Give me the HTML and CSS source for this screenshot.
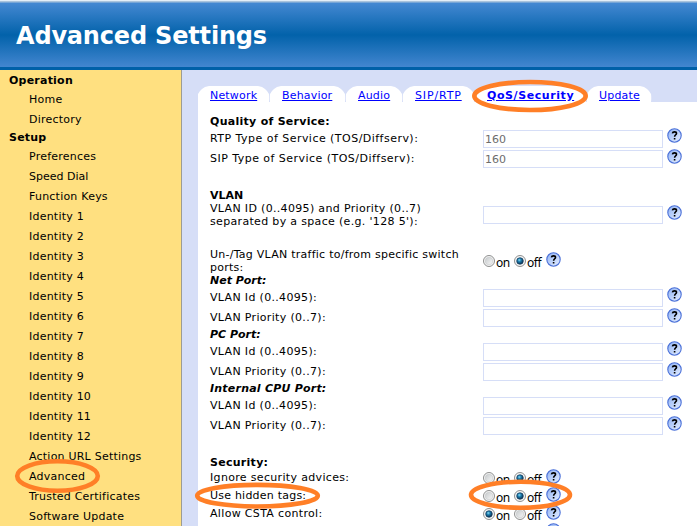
FILE: index.html
```html
<!DOCTYPE html>
<html lang="en">
<head>
<meta charset="utf-8">
<title>Advanced Settings</title>
<link rel="stylesheet" href="styles.css">
</head>
<body>
<svg class="defs" aria-hidden="true">
  <defs>
    <linearGradient id="helpFill" x1="0" y1="0" x2="1" y2="1"><stop offset="0" stop-color="#8fb2f4"/><stop offset="1" stop-color="#e8f0ff"/></linearGradient>
    <radialGradient id="dotFill" cx=".4" cy=".35" r=".65"><stop offset="0" stop-color="#8bdcf5"/><stop offset=".4" stop-color="#1d7fb0"/><stop offset="1" stop-color="#0a2c4c"/></radialGradient>
    <linearGradient id="offFill" x1="0" y1="0" x2="1" y2="1"><stop offset="0" stop-color="#c6cacc"/><stop offset="1" stop-color="#f7f7f7"/></linearGradient>
    <symbol id="help" viewBox="0 0 15 15"><circle cx="7.5" cy="7.5" r="6.7" fill="url(#helpFill)" stroke="#4a70d8" stroke-width="1.1"/><path d="M5.4 5.4C5.6 4.1 6.5 3.9 7.6 3.9C8.9 3.9 9.5 4.5 9.5 5.4C9.5 6.7 7.6 6.9 7.6 8.8M7.6 10V11.6" fill="none" stroke="#000" stroke-width="1.6"/></symbol>
    <symbol id="radio" viewBox="0 0 12 12"><circle cx="6" cy="6" r="5.5" fill="#f6f6f6" stroke="#8e8f8f"/><circle cx="6" cy="6" r="3.8" fill="url(#offFill)" stroke="#c4c8ca" stroke-width=".6"/></symbol>
    <symbol id="radio-on" viewBox="0 0 12 12"><circle cx="6" cy="6" r="5.5" fill="#f6f6f6" stroke="#8e8f8f"/><circle cx="6" cy="6" r="3.3" fill="url(#dotFill)" stroke="#123a5c" stroke-width=".7"/></symbol>
  </defs>
</svg>
<header class="banner"><h1>Advanced Settings</h1></header>
<div class="layout">
  <nav class="sidebar">
    <h2>Operation</h2>
    <ul><li>Home</li><li>Directory</li></ul>
    <h2 class="setup">Setup</h2>
    <ul>
      <li>Preferences</li><li class="normal">Speed Dial</li><li>Function Keys</li>
      <li>Identity 1</li><li>Identity 2</li><li>Identity 3</li><li>Identity 4</li><li>Identity 5</li><li>Identity 6</li>
      <li>Identity 7</li><li>Identity 8</li><li>Identity 9</li><li>Identity 10</li><li>Identity 11</li><li>Identity 12</li>
      <li>Action URL Settings</li><li>Advanced</li><li>Trusted Certificates</li><li>Software Update</li>
    </ul>
  </nav>
  <main class="content">
    <div class="tabs">
      <div class="tab network"><a href="#">Network</a></div>
      <div class="tab behavior"><a href="#">Behavior</a></div>
      <div class="tab audio"><a href="#">Audio</a></div>
      <div class="tab sip"><a href="#">SIP/RTP</a></div>
      <div class="tab qos"><a href="#">QoS/Security</a></div>
      <div class="tab update"><a href="#">Update</a></div>
    </div>
    <form class="panel">
      <h3>Quality of Service:</h3>
      <div class="row wide"><label>RTP Type of Service (TOS/Diffserv):</label><input value="160"><svg class="help"><use href="#help"/></svg></div>
      <div class="row wide second"><label>SIP Type of Service (TOS/Diffserv):</label><input value="160"><svg class="help"><use href="#help"/></svg></div>
      <h3 class="vlan">VLAN</h3>
      <div class="row double"><label>VLAN ID (0..4095) and Priority (0..7)<br>separated by a space (e.g. '128 5'):</label><input><svg class="help"><use href="#help"/></svg></div>
      <div class="row double tagging"><label>Un-/Tag VLAN traffic to/from specific switch<br>ports:</label><div class="choice"><svg class="radio"><use href="#radio"/></svg><span class="on">on</span><svg class="radio"><use href="#radio-on"/></svg><span class="off">off</span><svg class="help"><use href="#help"/></svg></div></div>
      <h3 class="port">Net Port:</h3>
      <div class="row"><label>VLAN Id (0..4095):</label><input><svg class="help"><use href="#help"/></svg></div>
      <div class="row second"><label>VLAN Priority (0..7):</label><input><svg class="help"><use href="#help"/></svg></div>
      <h3 class="port">PC Port:</h3>
      <div class="row"><label>VLAN Id (0..4095):</label><input><svg class="help"><use href="#help"/></svg></div>
      <div class="row second"><label>VLAN Priority (0..7):</label><input><svg class="help"><use href="#help"/></svg></div>
      <h3 class="port cpu">Internal CPU Port:</h3>
      <div class="row"><label>VLAN Id (0..4095):</label><input><svg class="help"><use href="#help"/></svg></div>
      <div class="row second"><label>VLAN Priority (0..7):</label><input><svg class="help"><use href="#help"/></svg></div>
      <h3 class="security">Security:</h3>
      <div class="row short"><label>Ignore security advices:</label><div class="choice"><svg class="radio"><use href="#radio"/></svg><span class="on">on</span><svg class="radio"><use href="#radio-on"/></svg><span class="off">off</span><svg class="help"><use href="#help"/></svg></div></div>
      <div class="row short"><label class="tight">Use hidden tags:</label><div class="choice"><svg class="radio"><use href="#radio"/></svg><span class="on">on</span><svg class="radio"><use href="#radio-on"/></svg><span class="off">off</span><svg class="help"><use href="#help"/></svg></div></div>
      <div class="row short"><label>Allow CSTA control:</label><div class="choice"><svg class="radio"><use href="#radio-on"/></svg><span class="on">on</span><svg class="radio"><use href="#radio"/></svg><span class="off">off</span><svg class="help"><use href="#help"/></svg></div></div>
      <div class="row short"><label></label><div class="choice last"><svg class="help"><use href="#help"/></svg></div></div>
    </form>
  </main>
</div>
<svg class="marks" viewBox="0 0 697 526" aria-hidden="true">
  <ellipse cx="530" cy="96" rx="55.7" ry="14"/>
  <ellipse cx="57.5" cy="476" rx="40.3" ry="14.8"/>
  <ellipse cx="257.5" cy="495.7" rx="60.3" ry="10.8"/>
  <ellipse cx="520.5" cy="494.8" rx="49.5" ry="13"/>
</svg>
</body>
</html>
```
FILE: styles.css
```css
* { box-sizing: border-box; }
html, body { margin: 0; height: 526px; overflow: hidden; }
body { font: 11px/13px "DejaVu Sans", Verdana, sans-serif; color: #000; background: #fff; position: relative; }
h1, h2, h3, ul { margin: 0; padding: 0; font-size: 11px; }
.defs { position: absolute; width: 0; height: 0; }
.banner { height: 70px; border-top: 1px solid #e3eef8; border-bottom: 3px solid #0060a8; background: linear-gradient(#a9c3dc 0 1px, #4488d2 2px, #0262aa 34px, #4386d0 66px); display: flex; align-items: center; padding: 4px 0 0 16px; }
.banner h1 { font-size: 24px; line-height: 30px; color: #fff; white-space: nowrap; letter-spacing: -.18px; }
.layout { display: flex; height: 456px; overflow: hidden; }
.sidebar { width: 182px; flex: none; background: #ffe080; border-right: 1px solid #9c9c94; padding-top: 4px; letter-spacing: .22px; }
.sidebar h2 { padding-left: 9px; height: 16px; line-height: 14px; }
.sidebar .setup { padding-top: 1px; height: 17px; }
.sidebar ul { list-style: none; padding-left: 29px; }
.sidebar li { height: 20px; line-height: 20px; white-space: nowrap; }
.sidebar .normal { letter-spacing: 0; }
.content { flex: 1; background: #d6def7; padding: 16px 0 0 16px; min-width: 0; }
.tabs { display: flex; height: 16px; }
.tab { flex: none; background: #fff; border-right: 1px solid #d6def7; clip-path: polygon(0 8px, 2px 5px, 4px 3px, 7px 1px, 11px 0, calc(100% - 12px) 0, calc(100% - 8px) 1px, calc(100% - 5px) 3px, calc(100% - 3px) 5px, calc(100% - 1px) 8px, 100% 100%, 0 100%); padding-left: 12px; line-height: 19px; letter-spacing: .18px; white-space: nowrap; }
.tab a { color: #00f; }
.network { width: 72px; } .behavior { width: 76px; } .audio { width: 57px; } .update { width: 65px; }
.sip { width: 72px; letter-spacing: .85px; }
.qos { width: 112px; font-weight: bold; letter-spacing: .58px; }
.panel { background: #fff; height: 500px; padding: 12px 0 0 12px; }
.panel h3 { height: 15px; line-height: 15px; letter-spacing: .28px; }
.panel .vlan { margin-top: 19px; height: 14px; letter-spacing: 0; }
.panel .port { font-style: italic; height: 14px; line-height: 13px; letter-spacing: 0; }
.panel .cpu { letter-spacing: .22px; }
.panel .security { margin-top: 19px; height: 14px; }
.row { display: grid; grid-template-columns: 273px 180px 15px; column-gap: 0; height: 20px; align-items: start; white-space: nowrap; }
.row label { line-height: 19px; letter-spacing: .33px; }
.row.wide label { letter-spacing: .47px; }
.row .tight { letter-spacing: .22px; }
.row input { width: 180px; height: 18px; margin: 1px 0 0; border: 1px solid #d6def7; padding: 0 0 0 1px; font: 11px "DejaVu Sans", Verdana, sans-serif; color: #6d6d6d; outline: 0; background: #fff; }
.help { width: 15px; height: 15px; flex: none; display: block; }
.row > .help { margin: -1px 0 0 4px; }
.second > .help { margin-top: 0; }
.double { height: 26px; }
.row.double label { line-height: 13px; }
.double input { margin-top: 4px; }
.double > .help { margin-top: 3px; }
.tagging { margin-top: 20px; }
.row.tagging label { letter-spacing: .25px; }
.row.short { height: 18px; }
.row.short label { line-height: 18px; }
.choice { display: flex; height: 18px; align-items: flex-start; font: 12px/18px "Noto Sans", sans-serif; }
.tagging .choice { margin-top: 4px; }
.choice .radio { width: 12px; height: 12px; flex: none; margin-top: 3px; }
.choice span { margin-top: 2px; padding-left: 1px; flex: none; letter-spacing: -.4px; }
.choice .on { width: 19px; }
.choice .off { width: 20px; }
.last { padding-left: 63px; }
.marks { position: absolute; left: 0; top: 0; width: 697px; height: 526px; pointer-events: none; }
.marks ellipse { fill: none; stroke: #ff7f27; stroke-width: 4.6; }
```
